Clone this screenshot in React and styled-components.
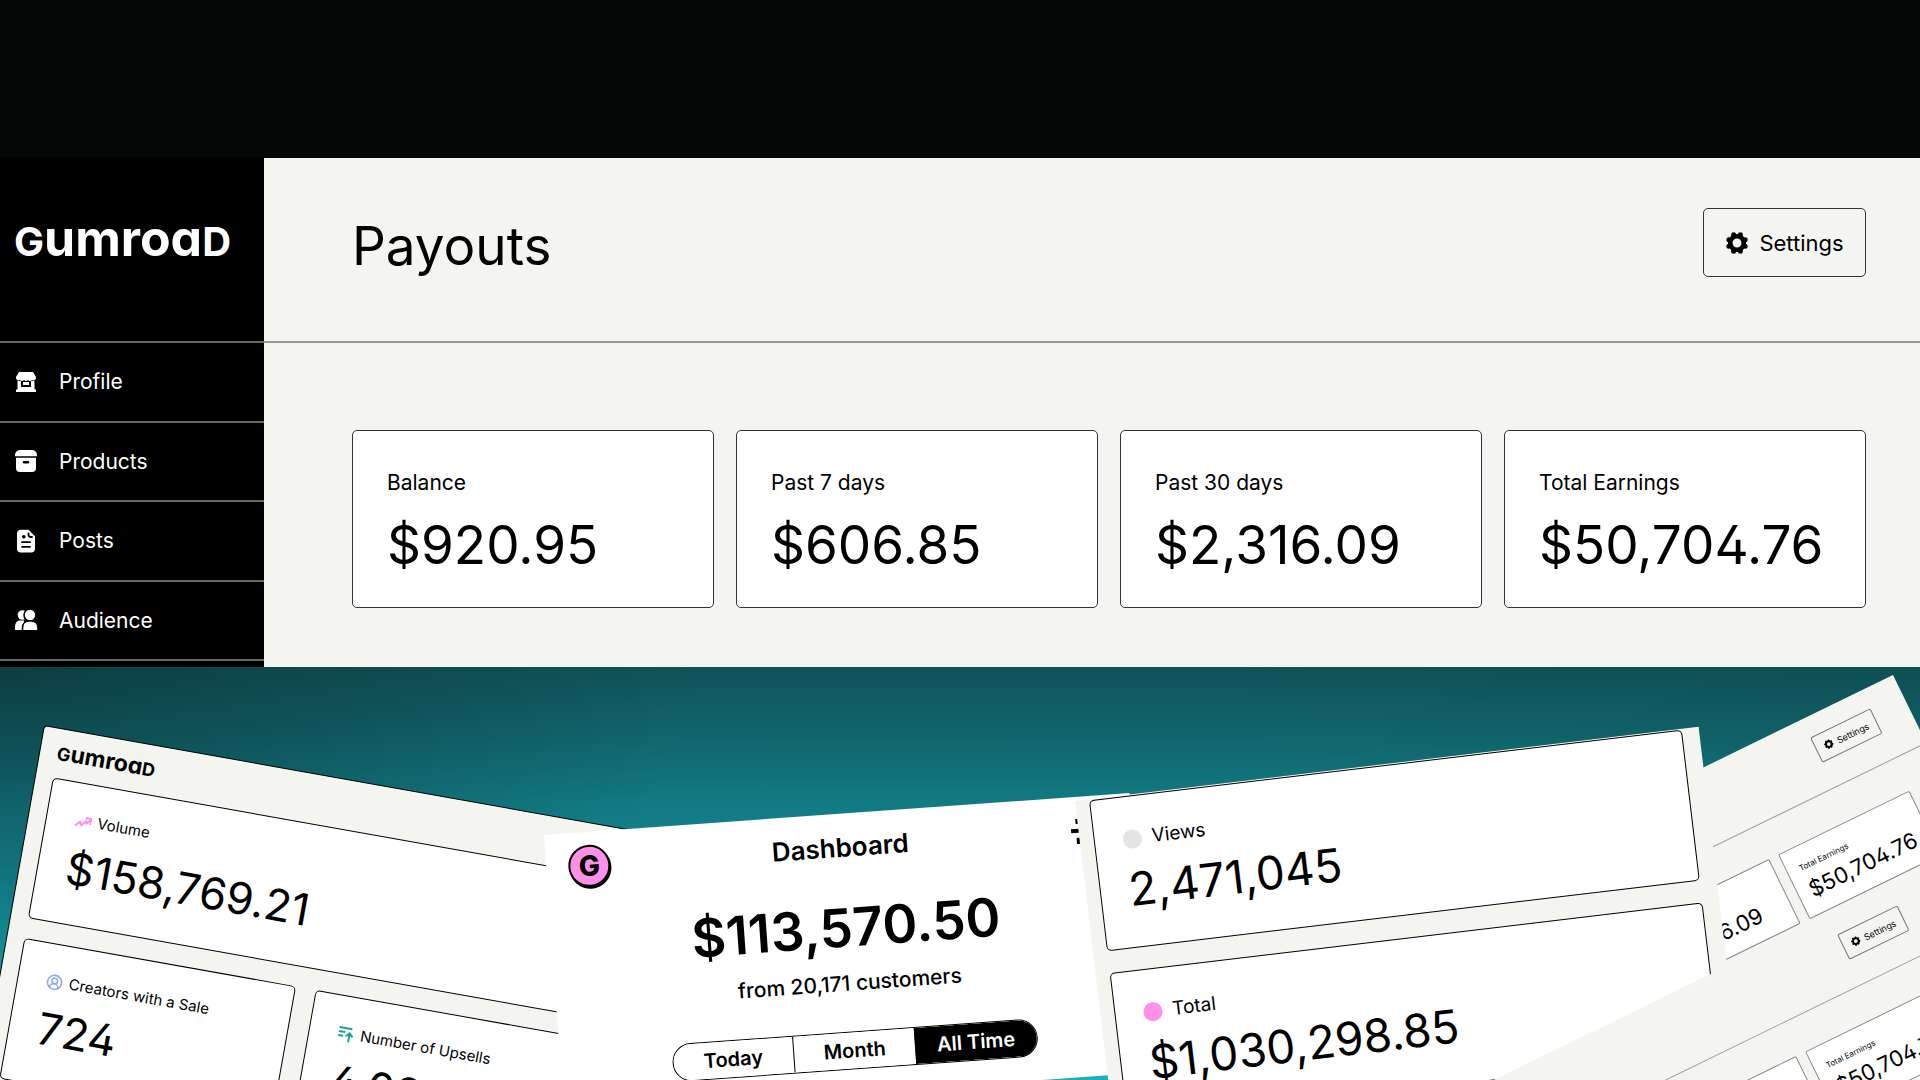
import React from 'react';
import styled, { createGlobalStyle, css } from 'styled-components';
import { CircleUserRound } from 'lucide-react';

const GlobalStyle = createGlobalStyle`
  *, *::before, *::after {
    box-sizing: border-box;
  }

  body {
    margin: 0;
    background: #050606;
    color: #000;
    font-family: Inter, "Liberation Sans", sans-serif;
  }

  h1, h2, h3, p, dl, dd, ul {
    margin: 0;
    padding: 0;
  }

  button {
    font-family: inherit;
    color: inherit;
    cursor: pointer;
  }
`;

const paper = '#f4f4f0';
const pink = '#ff90e8';

// open-topped four, used by the payout and creator figures
const openFour = css`
  font-feature-settings: 'cv02' 1;
`;

const Page = styled.div`
  display: flex;
  flex-direction: column;
  min-height: 100vh;
  overflow: hidden;
`;

const TopBand = styled.div`
  height: 158px;
  background: #050606;
`;

/* ---------- wordmark ---------- */

const Wordmark = styled.span`
  display: block;
  font-size: ${p => (p.$small ? 23 : 50)}px;
  line-height: 1;
  font-weight: 700;
  font-feature-settings: 'cv11' 1;
`;

const SmallCap = styled.span`
  font-size: ${p => (p.$small ? 18 : 40)}px;
`;

const Logo = ({ small }) => (
  <Wordmark $small={small}>
    <SmallCap $small={small}>G</SmallCap>umroa<SmallCap $small={small}>D</SmallCap>
  </Wordmark>
);

/* ---------- icons ---------- */

const StoreIcon = () => (
  <svg width="24" height="24" viewBox="0 0 24 24" fill="#fff" aria-hidden="true">
    <path d="M5 2h14l3 5v1a2.6 2.6 0 0 1-4 2 2.6 2.6 0 0 1-4 0 2.6 2.6 0 0 1-4 0 2.6 2.6 0 0 1-4 0 2.6 2.6 0 0 1-4-2V7z" />
    <path d="M3.500 11h3.500v6h10v-6h3.500v8.500H22V22H2v-2.500h1.500z" />
    <path d="M9 12h6v3H9z" />
  </svg>
);

const BoxIcon = () => (
  <svg width="24" height="24" viewBox="0 0 24 24" fill="#fff" aria-hidden="true">
    <path d="M6 1h12a5 5 0 0 1 5 5v1.200H1V6a5 5 0 0 1 5-5z" />
    <path
      fillRule="evenodd"
      d="M2 8.800h20V19a4 4 0 0 1-4 4H6a4 4 0 0 1-4-4zM10 12a1.200 1.200 0 0 0 0 2.600h4a1.200 1.200 0 0 0 0-2.600z"
    />
  </svg>
);

const DocIcon = () => (
  <svg width="24" height="24" viewBox="0 0 24 24" aria-hidden="true">
    <path
      fill="#fff"
      d="M7 .800h7.500l6.500 6.500V19.500a4 4 0 0 1-4 4H7a4 4 0 0 1-4-4V4.800a4 4 0 0 1 4-4z"
    />
    <path
      d="M14.500 4.500v1a2.500 2.500 0 0 0 2.500 2.500h1M8 13.200h8M8 17.800h8"
      fill="none"
      stroke="#000"
      strokeWidth="1.800"
      strokeLinecap="round"
    />
    <circle cx="9.800" cy="7.800" r="1.800" fill="#000" />
  </svg>
);

const PeopleIcon = () => (
  <svg width="24" height="24" viewBox="0 0 24 24" fill="#fff" aria-hidden="true">
    <circle cx="8.500" cy="7" r="4.800" />
    <path d="M1 22v-3c0-4 2-6.500 5-6.500h4V22z" />
    <circle cx="16" cy="7" r="6" stroke="#000" strokeWidth="1.600" />
    <path
      d="M8.500 22.800V20c0-4.500 2.800-7 6.500-7h2c3.800 0 7 2.500 7 7v2.800z"
      stroke="#000"
      strokeWidth="1.600"
    />
  </svg>
);

const GearIcon = ({ size }) => (
  <svg width={size} height={size} viewBox="0 0 24 24" aria-hidden="true">
    <circle cx="12" cy="12" r="6.800" fill="none" stroke="#000" strokeWidth="4.600" />
    {[22.5, 67.5, 112.5, 157.5, 202.5, 247.5, 292.5, 337.5].map(a => (
      <circle
        key={a}
        cx={12 + 8.8 * Math.cos((a * Math.PI) / 180)}
        cy={12 + 8.8 * Math.sin((a * Math.PI) / 180)}
        r="2.500"
        fill="#000"
      />
    ))}
  </svg>
);

const TrendIcon = () => (
  <svg width="17" height="17" viewBox="0 0 17 17" fill="none" stroke={pink} strokeWidth="2" aria-hidden="true">
    <path d="M1 13.500l4.500-4.500 1.800 3 4-4.500 1 2L16 5" />
    <path d="M10.500 4.200H16v6" />
  </svg>
);

const UpsellIcon = () => (
  <svg width="17" height="17" viewBox="0 0 17 17" fill="none" stroke="#23a094" strokeWidth="2" aria-hidden="true">
    <path d="M1 2.500h13M1 6.500h6.500M1 10.500h5M12 16V7.500M8.500 10.500L12 7l3.500 3.500" />
  </svg>
);

const PersonIcon = () => <CircleUserRound size={17} color="#90a8ed" strokeWidth={2.2} />;

const SlidersIcon = () => (
  <svg width="28" height="28" viewBox="0 0 28 28" fill="none" stroke="#000" strokeWidth="4" aria-hidden="true">
    <path d="M1 14h26" />
    <path d="M8 2v5M8 21v6M20 2v5" />
  </svg>
);

/* ---------- payouts ---------- */

const PayoutsSection = styled.section`
  display: flex;
`;

const Sidebar = styled.aside`
  display: flex;
  flex-direction: column;
  flex: none;
  width: 264px;
  padding-bottom: 6px;
  background: #000;
  color: #fff;
`;

const SidebarHead = styled.div`
  height: 185px;
  padding: 55px 0 0 14px;
  border-bottom: 2px solid #6b6764;
`;

const Nav = styled.nav`
  display: flex;
  flex: 1;
  flex-direction: column;
`;

const NavLink = styled.a`
  display: flex;
  flex: 1;
  align-items: center;
  gap: 21px;
  padding-left: 14px;
  border-bottom: 2px solid #6b6764;
  color: inherit;
  font-size: 21px;
  font-weight: 400;
  text-decoration: none;
`;

const Main = styled.main`
  flex: 1;
  min-width: 0;
  background: ${paper};
`;

const MainHead = styled.header`
  display: flex;
  align-items: flex-start;
  justify-content: space-between;
  height: 185px;
  padding: 50px 54px 0 88px;
  border-bottom: 2px solid #969793;
`;

const Title = styled.h1`
  font-size: 53px;
  font-weight: 400;
  line-height: 76px;
`;

const SettingsButton = styled.button`
  display: flex;
  align-items: center;
  justify-content: center;
  gap: 10px;
  width: 163px;
  height: 69px;
  padding: 0;
  border: 1px solid #333;
  border-radius: 5px;
  background: transparent;
  font-size: 22px;
`;

const CardRow = styled.dl`
  display: grid;
  grid-template-columns: repeat(4, 1fr);
  gap: 22px;
  padding: 87px 54px 59px 88px;
`;

const PayoutCard = styled.div`
  height: 178px;
  padding: 38px 0 0 34px;
  border: 1px solid #333;
  border-radius: 5px;
  background: #fff;
`;

const PayoutLabel = styled.dt`
  font-size: 21px;
  line-height: 28px;
`;

const PayoutValue = styled.dd`
  margin-top: 13px;
  font-size: 53px;
  line-height: 70px;
  ${openFour}
`;

/* ---------- tilted panels ---------- */

const Stage = styled.section`
  position: relative;
  flex: 1;
  min-height: 413px;
  overflow: hidden;
  background:
    radial-gradient(ellipse 700px 360px at 0 0, rgba(8, 36, 40, 0.45), transparent),
    radial-gradient(ellipse 700px 300px at 100% 0, rgba(8, 50, 54, 0.15), transparent),
    linear-gradient(#105359, #11666d 17%, #127a83 33%, #1aafbc);
`;

const Panel = styled.article`
  position: absolute;
  background: ${paper};
`;

const CreatorPanel = styled(Panel)`
  top: 58px;
  left: 44px;
  width: 608px;
  padding: 12px 17px 40px;
  border: 1px solid #000;
  border-radius: 4px;
  transform: rotate(10.1deg);
  transform-origin: 0 0;
`;

const CreatorHead = styled.div`
  height: 37px;
`;

const CreatorGrid = styled.div`
  display: grid;
  grid-template-columns: 1fr 1fr;
  gap: 20px;
`;

const StatCard = styled.div`
  grid-column: ${p => (p.$wide ? '1 / -1' : 'auto')};
  height: ${p => (p.$tall ? 152 : 143)}px;
  padding: ${p => (p.$tall ? '30px 0 0 28px' : '25px 0 0 28px')};
  border: 1px solid #000;
  border-radius: 5px;
  background: #fff;
`;

const StatLabel = styled.h3`
  display: flex;
  align-items: center;
  gap: ${p => (p.$tall ? 10 : 6)}px;
  font-size: ${p => (p.$tall ? 19 : 15)}px;
  font-weight: 400;
  line-height: 24px;
`;

const StatValue = styled.p`
  margin-top: ${p => (p.$tall ? 8 : 6)}px;
  font-size: ${p => (p.$tall ? 46 : 44)}px;
  line-height: 60px;
  ${p => !p.$tall && openFour}
`;

const Dot = styled.span`
  width: 19px;
  height: 19px;
  border-radius: 50%;
  background: ${p => p.$color};
`;

const DashboardPanel = styled(Panel)`
  top: 168px;
  left: 544px;
  width: 587px;
  height: 280px;
  padding: 13px 20px 0 22px;
  background: #fff;
  transform: rotate(-4.1deg);
  transform-origin: 0 0;
  text-align: center;
`;

const DashboardHead = styled.div`
  display: grid;
  grid-template-columns: 42px 1fr 42px;
  align-items: center;
`;

const Coin = styled.span`
  display: flex;
  align-items: center;
  justify-content: center;
  width: 42px;
  height: 42px;
  border: 2px solid #000;
  border-radius: 50%;
  background: ${pink};
  box-shadow: 1px 2px 0 #000;
  font-size: 28px;
  font-weight: 800;
`;

const DashboardTitle = styled.h2`
  font-size: 26px;
  font-weight: 600;
  line-height: 42px;
`;

const Revenue = styled.p`
  margin-top: 27px;
  font-size: 53px;
  font-weight: 600;
  line-height: 64px;
`;

const Customers = styled.p`
  margin-top: 9px;
  font-size: 21px;
  font-weight: 500;
  line-height: 30px;
`;

const Segmented = styled.div`
  display: flex;
  width: 366px;
  height: 38px;
  margin: 33px auto 0;
  overflow: hidden;
  border: 1px solid #000;
  border-radius: 19px;
`;

const Segment = styled.button`
  flex: 1;
  padding: 0;
  border: 0;
  border-left: ${p => (p.$first ? '0' : '1px solid #000')};
  background: ${p => (p.$active ? '#000' : '#fff')};
  color: ${p => (p.$active ? '#fff' : '#000')};
  font-size: 20px;
  font-weight: 600;
`;

const ViewsPanel = styled(Panel)`
  display: grid;
  gap: 22px;
  top: 134px;
  left: 1075px;
  width: 628px;
  padding: 1px 17px 40px 14px;
  transform: rotate(-6.8deg);
  transform-origin: 0 0;
`;

const MiniPanel = styled(Panel)`
  top: ${p => p.$top}px;
  right: ${p => p.$right}px;
  width: 690px;
  height: 206px;
  transform: rotate(-26deg);
  transform-origin: 100% 0;
`;

const MiniHead = styled.header`
  display: flex;
  justify-content: flex-end;
  height: 76px;
  padding: 20px 35px 0 0;
  border-bottom: 1px solid #a0a19d;
`;

const MiniButton = styled(SettingsButton)`
  gap: 4px;
  width: 67px;
  height: 28px;
  border-color: #777;
  border-radius: 2px;
  font-size: 9px;
`;

const MiniRow = styled.dl`
  display: flex;
  justify-content: flex-end;
  gap: 10px;
  padding: 35px 36px 0 0;
`;

const MiniCard = styled(PayoutCard)`
  flex: none;
  width: 146px;
  height: 72px;
  padding: 15px 0 0 12px;
  border-color: #888;
  border-radius: 2px;
`;

const MiniLabel = styled(PayoutLabel)`
  font-size: 8px;
  line-height: 12px;
`;

const MiniValue = styled(PayoutValue)`
  margin-top: 4px;
  font-size: 22px;
  line-height: 28px;
`;

const links = [
  { name: 'Profile', Icon: StoreIcon },
  { name: 'Products', Icon: BoxIcon },
  { name: 'Posts', Icon: DocIcon },
  { name: 'Audience', Icon: PeopleIcon }
];

const payouts = [
  { label: 'Balance', value: '$920.95' },
  { label: 'Past 7 days', value: '$606.85' },
  { label: 'Past 30 days', value: '$2,316.09' },
  { label: 'Total Earnings', value: '$50,704.76' }
];

const periods = ['Today', 'Month', 'All Time'];

const MiniPayouts = ({ top, right }) => (
  <MiniPanel $top={top} $right={right}>
    <MiniHead>
      <MiniButton type="button">
        <GearIcon size={10} />
        Settings
      </MiniButton>
    </MiniHead>
    <MiniRow>
      {payouts.slice(2).map(({ label, value }) => (
        <MiniCard key={label}>
          <MiniLabel>{label}</MiniLabel>
          <MiniValue>{value}</MiniValue>
        </MiniCard>
      ))}
    </MiniRow>
  </MiniPanel>
);

const Stat = ({ icon, label, value, wide, tall }) => (
  <StatCard $wide={wide} $tall={tall}>
    <StatLabel $tall={tall}>
      {icon}
      {label}
    </StatLabel>
    <StatValue $tall={tall}>{value}</StatValue>
  </StatCard>
);

export default class App extends React.Component {
  state = {
    period: 'All Time'
  };

  onSelect = period => this.setState({ period });

  render() {
    return (
      <React.Fragment>
        <GlobalStyle />
        <Page>
          <TopBand />
          <PayoutsSection>
            <Sidebar>
              <SidebarHead>
                <Logo />
              </SidebarHead>
              <Nav>
                {links.map(({ name, Icon }) => (
                  <NavLink key={name} href={`#${name.toLowerCase()}`}>
                    <Icon />
                    {name}
                  </NavLink>
                ))}
              </Nav>
            </Sidebar>
            <Main>
              <MainHead>
                <Title>Payouts</Title>
                <SettingsButton type="button">
                  <GearIcon size={24} />
                  Settings
                </SettingsButton>
              </MainHead>
              <CardRow>
                {payouts.map(({ label, value }) => (
                  <PayoutCard key={label}>
                    <PayoutLabel>{label}</PayoutLabel>
                    <PayoutValue>{value}</PayoutValue>
                  </PayoutCard>
                ))}
              </CardRow>
            </Main>
          </PayoutsSection>

          <Stage>
            <CreatorPanel>
              <CreatorHead>
                <Logo small />
              </CreatorHead>
              <CreatorGrid>
                <Stat wide icon={<TrendIcon />} label="Volume" value="$158,769.21" />
                <Stat icon={<PersonIcon />} label="Creators with a Sale" value="724" />
                <Stat icon={<UpsellIcon />} label="Number of Upsells" value="4,092" />
              </CreatorGrid>
            </CreatorPanel>

            <DashboardPanel>
              <DashboardHead>
                <Coin>G</Coin>
                <DashboardTitle>Dashboard</DashboardTitle>
                <SlidersIcon />
              </DashboardHead>
              <Revenue>$113,570.50</Revenue>
              <Customers>from 20,171 customers</Customers>
              <Segmented>
                {periods.map((name, index) => (
                  <Segment
                    key={name}
                    type="button"
                    $first={index === 0}
                    $active={this.state.period === name}
                    onClick={() => this.onSelect(name)}
                  >
                    {name}
                  </Segment>
                ))}
              </Segmented>
            </DashboardPanel>

            <MiniPayouts top={8} right={27} />

            <ViewsPanel>
              <Stat tall icon={<Dot $color="#e4e4e4" />} label="Views" value="2,471,045" />
              <Stat tall icon={<Dot $color={pink} />} label="Total" value="$1,030,298.85" />
            </ViewsPanel>

            <MiniPayouts top={205} right={0} />
          </Stage>
        </Page>
      </React.Fragment>
    );
  }
}
